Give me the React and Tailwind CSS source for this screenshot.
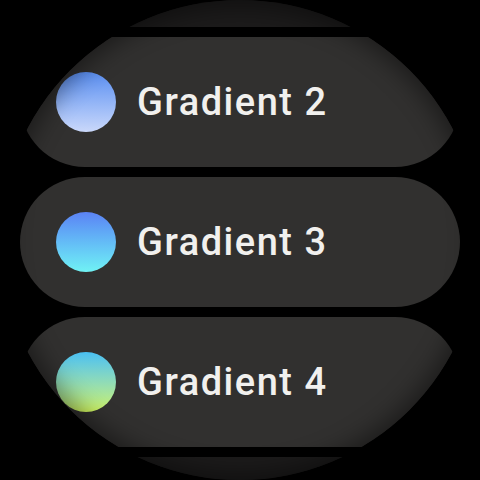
const chips = [
  { id: 1, grad: 'bg-gradient-to-b from-[#7b6cf0] to-[#c9b8fb]', dim: true },
  { id: 2, label: 'Gradient 2', grad: 'bg-gradient-to-b from-[#5a8ef0] to-[#cad8fa]' },
  { id: 3, label: 'Gradient 3', grad: 'bg-gradient-to-b from-[#5b82f4] to-[#70f2f4]' },
  { id: 4, label: 'Gradient 4', grad: 'bg-gradient-to-b from-[#48bff2] to-[#cdf25c]' },
  { id: 5, grad: 'bg-gradient-to-b from-[#9be05a] to-[#f2e05c]', dim: true },
];

function Chip({ label, grad, dim }) {
  return (
    <div
      className={
        'flex h-[130px] shrink-0 items-center rounded-full pl-[36px] ' +
        (dim ? 'bg-[#1c1b1b]' : 'bg-[#31302f]')
      }
    >
      {!dim && (
        <>
          <div className={'h-[60px] w-[60px] shrink-0 rounded-full ' + grad} />
          <span
            className="ml-[21px] text-[38px] font-medium tracking-[0.04em] text-[#f1f0ee]"
            style={{ fontFamily: 'Roboto, "Noto Sans", sans-serif' }}
          >
            {label}
          </span>
        </>
      )}
    </div>
  );
}

export default function App() {
  return (
    <div className="h-[480px] w-[480px] bg-black">
      <div className="relative h-[480px] w-[480px] overflow-hidden rounded-full bg-black">
        <div className="-mt-[103px] flex flex-col gap-[10px] px-[20px]">
          {chips.map((c) => (
            <Chip key={c.id} {...c} />
          ))}
        </div>
        {/* edge vignette */}
        <div className="pointer-events-none absolute inset-0 rounded-full shadow-[inset_0_0_24px_6px_rgba(0,0,0,0.45)]" />
      </div>
    </div>
  );
}
